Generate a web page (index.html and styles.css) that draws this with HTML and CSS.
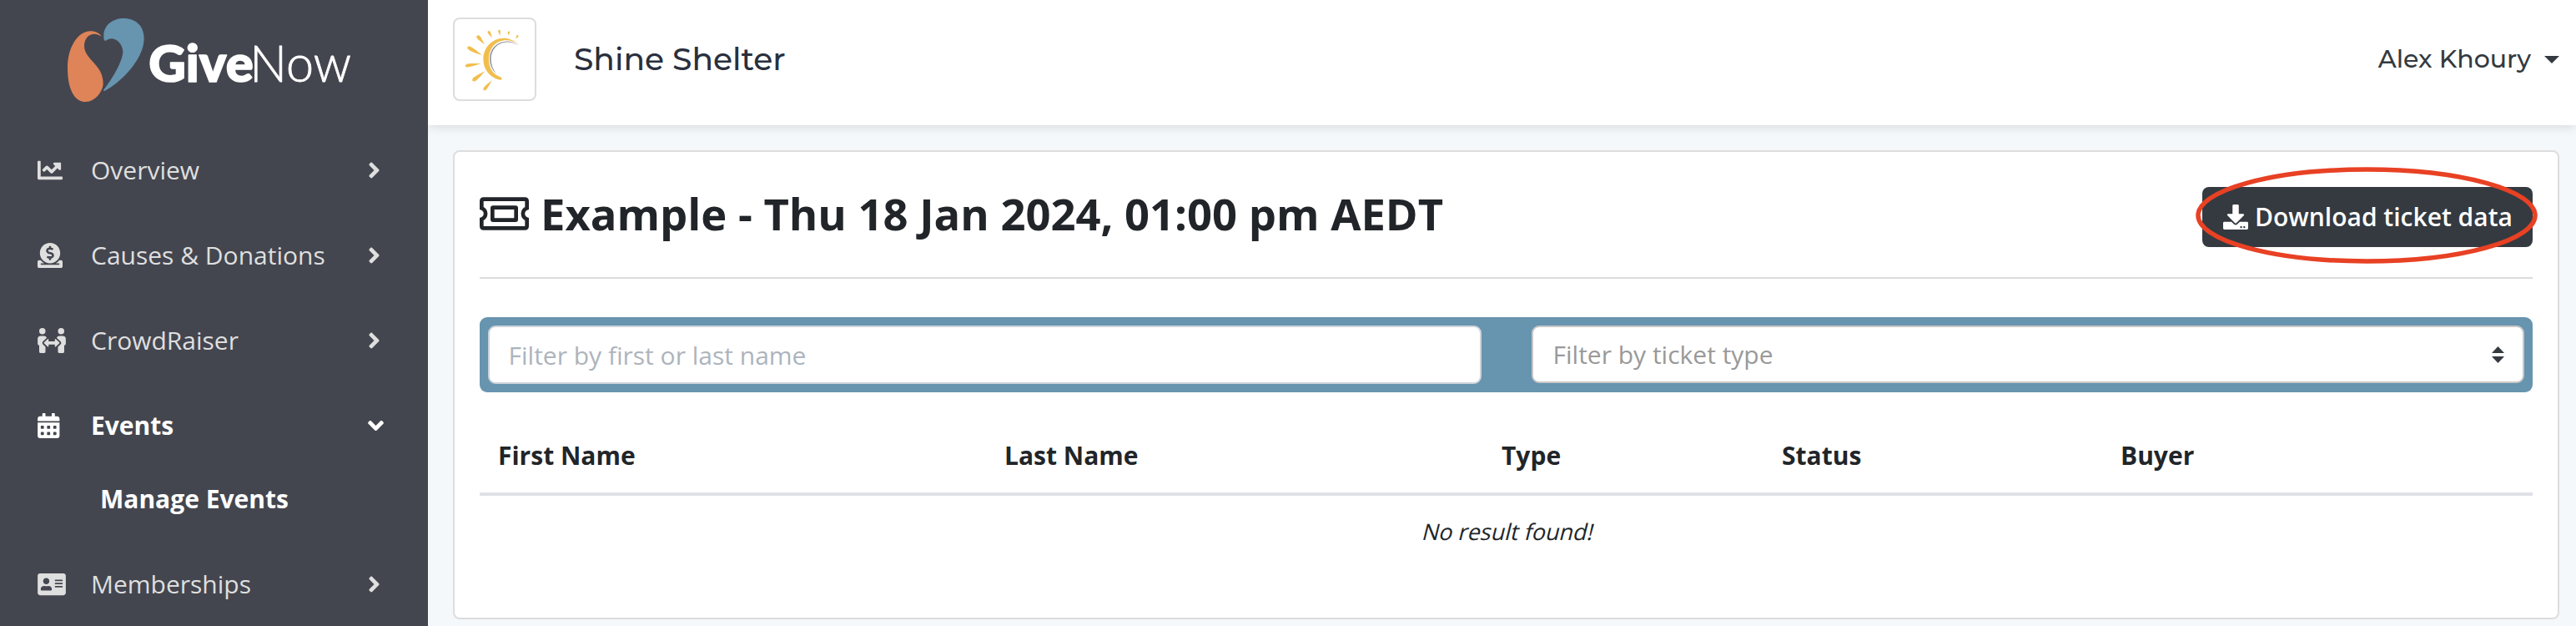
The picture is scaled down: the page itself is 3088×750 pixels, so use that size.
FILE: index.html
```
<!DOCTYPE html>
<html lang="en">
<head>
<meta charset="utf-8">
<title>GiveNow - Manage Events</title>
<link rel="stylesheet" href="styles.css">
</head>
<body>
<svg class="defs" aria-hidden="true">
  <defs>
    <symbol id="angle-right" viewBox="0 0 256 512"><path d="M224.300 273l-136 136c-9.400 9.400-24.600 9.400-33.900 0l-22.600-22.600c-9.400-9.400-9.400-24.600 0-33.900l96.400-96.400-96.400-96.400c-9.400-9.400-9.400-24.600 0-33.900L54.300 103c9.400-9.400 24.600-9.400 33.900 0l136 136c9.500 9.400 9.500 24.600.1 34z"/></symbol>
    <path id="ray" d="M0 0C.3 -.25 .6 -.5 .8 -.5C1.050 -.5 1.050 .5 .8 .5C.6 .5 .3 .25 0 0Z"/>
  </defs>
</svg>
<div class="app">
  <aside class="sidebar">
    <div class="brand">
      <svg class="brand-logo" viewBox="240 60 1025 310">
        <path fill="#de8458" d="M366 132C354 116 340 112 325 112C280 112 243 170 243 245C243 320 268 366 307 366C345 366 371 325 371 300C371 230 303 215 303 165C303 135 325 119 345 123C355 125 360 128 366 132Z"/>
        <path fill="#6794af" d="M380 147C372 145 373 135 373 125C375 90 405 66 445 66C490 66 518 95 518 138C518 215 430 300 376 327C372 328 371 325 374 321C410 275 442 215 442 185C440 150 405 125 380 147Z"/>
        <text class="brand-give" x="535" y="293" textLength="376" lengthAdjust="spacingAndGlyphs">Give</text>
        <text class="brand-now" x="898" y="293" textLength="365" lengthAdjust="spacingAndGlyphs">Now</text>
      </svg>
    </div>
    <nav class="menu">
      <a class="menu-item">
        <span class="menu-icon"><svg viewBox="0 0 512 512" width="30" height="30"><path d="M496 384H64V80c0-8.840-7.160-16-16-16H16C7.160 64 0 71.160 0 80v336c0 17.670 14.330 32 32 32h464c8.840 0 16-7.160 16-16v-32c0-8.840-7.160-16-16-16zM464 96H345.940c-21.380 0-32.090 25.850-16.970 40.970l32.400 32.400L288 242.750l-73.370-73.370c-12.500-12.500-32.760-12.500-45.250 0l-68.690 68.690c-6.250 6.250-6.250 16.380 0 22.630l22.620 22.620c6.250 6.250 16.380 6.250 22.630 0L192 237.250l73.370 73.370c12.500 12.500 32.760 12.500 45.250 0l96-96 32.400 32.400c15.120 15.120 40.970 4.410 40.970-16.970V112c.01-8.840-7.150-16-15.990-16z"/></svg></span>
        <span class="menu-label">Overview</span>
        <svg class="menu-arrow" width="15" height="30"><use href="#angle-right"/></svg>
      </a>
      <a class="menu-item">
        <span class="menu-icon"><svg viewBox="0 0 512 512" width="30" height="30"><path d="M256 416c114.900 0 208-93.100 208-208S370.900 0 256 0 48 93.100 48 208s93.100 208 208 208zM233.800 97.400V80.600c0-9.200 7.400-16.600 16.600-16.600h11.100c9.200 0 16.600 7.400 16.600 16.600v17c15.500.8 30.500 6.100 43 15.400 5.600 4.100 6.200 12.300 1.200 17.100L306 145.600c-3.800 3.700-9.500 3.800-14 1-5.400-3.400-11.400-5.100-17.800-5.100h-38.900c-9 0-16.300 8.200-16.300 18.300 0 8.200 5 15.500 12.100 17.600l62.300 18.700c25.700 7.700 43.700 32.400 43.700 60.100 0 34-26.400 61.500-59.100 62.400v16.800c0 9.200-7.400 16.600-16.600 16.600h-11.100c-9.200 0-16.600-7.400-16.600-16.600v-17c-15.500-.8-30.500-6.100-43-15.400-5.600-4.100-6.200-12.300-1.200-17.100l16.300-15.500c3.800-3.700 9.500-3.800 14-1 5.400 3.400 11.400 5.100 17.800 5.100h38.900c9 0 16.300-8.200 16.300-18.300 0-8.200-5-15.500-12.100-17.600l-62.300-18.700c-25.700-7.700-43.700-32.400-43.700-60.100.1-34 26.400-61.500 59.100-62.400zM480 352h-32.500c-19.600 26-44.600 47.700-73 64h63.800c5.300 0 9.600 3.600 9.600 8v16c0 4.400-4.300 8-9.600 8H73.600c-5.300 0-9.600-3.600-9.600-8v-16c0-4.400 4.300-8 9.600-8h63.800c-28.400-16.300-53.300-38-73-64H32c-17.700 0-32 14.300-32 32v96c0 17.700 14.300 32 32 32h448c17.700 0 32-14.300 32-32v-96c0-17.700-14.300-32-32-32z"/></svg></span>
        <span class="menu-label">Causes &amp; Donations</span>
        <svg class="menu-arrow" width="15" height="30"><use href="#angle-right"/></svg>
      </a>
      <a class="menu-item">
        <span class="menu-icon"><svg viewBox="0 0 576 512" width="34" height="30"><path d="M96,128A64,64,0,1,0,32,64,64,64,0,0,0,96,128Zm0,176.080a44.110,44.110,0,0,1,13.640-32L181.770,204c1.650-1.550,3.770-2.310,5.610-3.570A63.910,63.910,0,0,0,128,160H64A64,64,0,0,0,0,224v96a32,32,0,0,0,32,32V480a32,32,0,0,0,32,32h64a32,32,0,0,0,32-32V383.610l-50.360-47.530A44.080,44.080,0,0,1,96,304.080ZM480,128a64,64,0,1,0-64-64A64,64,0,0,0,480,128Zm32,32H448a63.910,63.910,0,0,0-59.380,40.420c1.840,1.270,4,2,5.620,3.590l72.120,68.060a44.370,44.370,0,0,1,0,64L416,383.620V480a32,32,0,0,0,32,32h64a32,32,0,0,0,32-32V352a32,32,0,0,0,32-32V224A64,64,0,0,0,512,160ZM444.400,295.340l-72.120-68.060A12,12,0,0,0,352,236v36H224V236a12,12,0,0,0-20.280-8.730L131.600,295.340a12.400,12.400,0,0,0,0,17.470l72.120,68.070A12,12,0,0,0,224,372.140V336H352v36.140a12,12,0,0,0,20.280,8.740l72.120-68.070A12.400,12.400,0,0,0,444.400,295.340Z"/></svg></span>
        <span class="menu-label">CrowdRaiser</span>
        <svg class="menu-arrow" width="15" height="30"><use href="#angle-right"/></svg>
      </a>
      <a class="menu-item active">
        <span class="menu-icon"><svg viewBox="0 0 448 512" width="26.500" height="30"><path fill-rule="evenodd" d="M0 464c0 26.500 21.500 48 48 48h352c26.500 0 48-21.500 48-48V192H0zM76 256h40q12 0 12 12v40q0 12-12 12H76q-12 0-12-12v-40q0-12 12-12zm128 0h40q12 0 12 12v40q0 12-12 12h-40q-12 0-12-12v-40q0-12 12-12zm128 0h40q12 0 12 12v40q0 12-12 12h-40q-12 0-12-12v-40q0-12 12-12zM76 384h40q12 0 12 12v40q0 12-12 12H76q-12 0-12-12v-40q0-12 12-12zm128 0h40q12 0 12 12v40q0 12-12 12h-40q-12 0-12-12v-40q0-12 12-12zm128 0h40q12 0 12 12v40q0 12-12 12h-40q-12 0-12-12v-40q0-12 12-12zM400 64h-48V16c0-8.800-7.200-16-16-16h-32c-8.800 0-16 7.200-16 16v48H160V16c0-8.800-7.200-16-16-16h-32c-8.800 0-16 7.200-16 16v48H48C21.500 64 0 85.500 0 112v48h448v-48c0-26.500-21.500-48-48-48z"/></svg></span>
        <span class="menu-label">Events</span>
        <svg class="menu-arrow down" viewBox="0 0 320 512" width="19" height="30"><path d="M143 352.300L7 216.300c-9.400-9.400-9.400-24.600 0-33.900l22.600-22.600c9.400-9.400 24.600-9.400 33.900 0l96.400 96.400 96.400-96.400c9.400-9.400 24.600-9.400 33.900 0l22.600 22.600c9.400 9.400 9.400 24.600 0 33.900l-136 136c-9.200 9.400-24.400 9.400-33.800 0z"/></svg>
      </a>
      <a class="submenu-item">Manage Events</a>
      <a class="menu-item">
        <span class="menu-icon"><svg viewBox="0 0 576 512" width="34" height="30"><path d="M528 32H48C21.500 32 0 53.500 0 80v352c0 26.500 21.500 48 48 48h480c26.500 0 48-21.500 48-48V80c0-26.500-21.500-48-48-48zm-352 96c35.300 0 64 28.700 64 64s-28.700 64-64 64-64-28.700-64-64 28.700-64 64-64zm112 236.800c0 10.600-10 19.200-22.400 19.200H86.400C74 384 64 375.400 64 364.800v-19.200c0-31.800 30.100-57.600 67.200-57.600h5c12.300 5.100 25.700 8 39.800 8s27.600-2.900 39.800-8h5c37.100 0 67.200 25.800 67.200 57.600v19.200zM512 312c0 4.400-3.600 8-8 8H360c-4.400 0-8-3.600-8-8v-16c0-4.400 3.600-8 8-8h144c4.400 0 8 3.600 8 8v16zm0-64c0 4.400-3.600 8-8 8H360c-4.400 0-8-3.600-8-8v-16c0-4.400 3.600-8 8-8h144c4.400 0 8 3.600 8 8v16zm0-64c0 4.400-3.600 8-8 8H360c-4.400 0-8-3.600-8-8v-16c0-4.400 3.600-8 8-8h144c4.400 0 8 3.600 8 8v16z"/></svg></span>
        <span class="menu-label">Memberships</span>
        <svg class="menu-arrow" width="15" height="30"><use href="#angle-right"/></svg>
      </a>
    </nav>
  </aside>
  <div class="main">
    <header class="topbar">
      <div class="org-logo">
        <svg viewBox="15 24 288 288" width="96" height="96">
          <g fill="#f1be4e">
            <path d="M247 116C228 98 205 91 190 92C150 93 118 125 118 168C118 205 142 235 178 242C184 243 187 236 182 233C152 222 138 200 138 168C138 130 160 103 195 100C215 99 232 105 247 116Z"/>
            <use href="#ray" transform="translate(178 83) rotate(-99) scale(21 8)"/>
            <use href="#ray" transform="translate(208 82) rotate(-80) scale(15 7)"/>
            <use href="#ray" transform="translate(235 94) rotate(-56) scale(15 7)"/>
            <use href="#ray" transform="translate(149 90) rotate(-119) scale(27 10)"/>
            <use href="#ray" transform="translate(122 114) rotate(-130) scale(41 13)"/>
            <use href="#ray" transform="translate(113 153) rotate(-151) scale(60 13)"/>
            <use href="#ray" transform="translate(109 183) rotate(171) scale(57 12)"/>
            <use href="#ray" transform="translate(124 211) rotate(142) scale(57 14)"/>
            <use href="#ray" transform="translate(149 244) rotate(130) scale(46 12)"/>
          </g>
          <path fill="#94979d" d="M245 118C228 106 210 102 197 104C164 107 141 132 141 165C141 187 149 206 164 219C152 204 146 187 146 166C146 134 168 110 197 107C212 105 228 109 245 118Z"/>
        </svg>
      </div>
      <div class="org-name">Shine Shelter</div>
      <div class="user">Alex Khoury<span class="caret"></span></div>
    </header>
    <section class="card">
      <div class="card-head">
        <h2 class="title">
          <svg class="title-icon" viewBox="45 49 177 118" width="59" height="40"><g fill="none" stroke="#212529" stroke-width="14"><path d="M60 56H207Q215 56 215 64V88C196 96 196 120 215 128V152Q215 160 207 160H60Q52 160 52 152V128C71 120 71 96 52 88V64Q52 56 60 56Z"/><rect x="91" y="86" width="85" height="45" rx="2"/></g></svg>
          <span>Example - Thu 18 Jan 2024, 01:00 pm AEDT</span>
        </h2>
        <button class="download">
          <svg viewBox="0 0 512 512" width="30" height="30"><path d="M216 0h80c13.300 0 24 10.700 24 24v168h87.700c17.800 0 26.700 21.500 14.100 34.100L269.700 378.300c-7.500 7.500-19.800 7.500-27.300 0L90.100 226.100c-12.600-12.600-3.700-34.100 14.100-34.100H192V24c0-13.300 10.700-24 24-24zm296 376v112c0 13.300-10.700 24-24 24H24c-13.300 0-24-10.700-24-24V376c0-13.300 10.700-24 24-24h146.700l49 49c20.100 20.100 52.500 20.100 72.600 0l49-49H488c13.300 0 24 10.700 24 24zm-124 88c0-11-9-20-20-20s-20 9-20 20 9 20 20 20 20-9 20-20zm64 0c0-11-9-20-20-20s-20 9-20 20 9 20 20 20 20-9 20-20z"/></svg>
          <span>Download ticket data</span>
          <svg class="highlight" viewBox="0 0 410 116"><ellipse cx="205" cy="58" rx="202" ry="55" fill="none" stroke="#e84124" stroke-width="5.500"/></svg>
        </button>
      </div>
      <div class="filters">
        <input class="filter-name" type="text" placeholder="Filter by first or last name">
        <div class="filter-type">
          <span>Filter by ticket type</span>
          <svg viewBox="0 0 15 20" width="15" height="20"><path fill="#343a40" d="M7.500 0L15 8H0ZM7.500 20L15 12H0Z"/></svg>
        </div>
      </div>
      <div class="table">
        <div class="table-head">
          <span>First Name</span><span>Last Name</span><span>Type</span><span>Status</span><span>Buyer</span>
        </div>
        <div class="table-empty"><span class="slanted">No result found!</span></div>
      </div>
    </section>
  </div>
</div>
</body>
</html>
```
FILE: styles.css
```
* { box-sizing: border-box; }
body {
  margin: 0;
  font-family: "Open Sans", "Noto Sans", sans-serif;
  font-size: 30px;
  color: #212529;
  background: #f4f8fb;
}
svg { display: block; flex: none; }
.defs { display: none; }
.app { display: flex; height: 750px; overflow: hidden; }

/* Sidebar */
.sidebar { flex: none; width: 513px; background: #44464f; color: #dfdfdf; }
.brand { height: 153px; padding: 20px 0 0 80px; }
.brand-logo { width: 341.670px; height: 103.330px; overflow: visible; }
.brand-give, .brand-now { font-family: Lato, sans-serif; font-size: 181px; fill: #fff; stroke: #fff; stroke-linejoin: round; }
.brand-give { font-weight: 900; stroke-width: 5; }
.brand-now { font-weight: 300; stroke-width: 2.500; }
.menu-item { display: flex; align-items: center; height: 102px; padding: 0 57px 0 45px; }
.menu-item svg { fill: currentColor; }
.menu-icon { width: 64px; flex: none; }
.menu-label { flex: 1; line-height: 40px; white-space: nowrap; }
.menu-arrow.down { margin-right: -4px; }
.active { color: #fff; font-weight: 700; }
.submenu-item {
  display: flex;
  align-items: center;
  height: 88px;
  padding: 0 0 16px 120px;
  color: #fff;
  font-weight: 700;
}

/* Top bar */
.main { flex: 1; min-width: 0; }
.topbar {
  display: flex;
  align-items: center;
  height: 150px;
  padding: 0 20px 8px 30px;
  background: #fff;
  box-shadow: 0 2px 12px rgba(0, 0, 0, .12);
  clip-path: inset(0 0 -30px 0);
}
.org-logo { width: 100px; height: 100px; border: 2px solid #ddd; border-radius: 8px; }
.org-name {
  margin-left: 45px;
  font: 500 37.600px/46px Montserrat, Inter, sans-serif;
  color: #292f3d;
}
.user {
  display: flex;
  align-items: center;
  gap: 16px;
  margin-left: auto;
  font: 500 30px/40px Montserrat, Inter, sans-serif;
  color: #343a40;
}
.caret { border: 9px solid transparent; border-top-color: currentColor; border-bottom: 0; }

/* Card */
.card {
  height: 562px;
  margin: 30px 20px 0 30px;
  padding: 42px 30px 0;
  background: #fff;
  border: 2px solid #ddd;
  border-radius: 8px;
}
.card-head {
  display: flex;
  align-items: flex-start;
  justify-content: space-between;
  height: 110px;
  border-bottom: 2px solid #ddd;
}
.title {
  display: flex;
  align-items: center;
  gap: 14px;
  margin: 0;
  font-size: 52.500px;
  font-weight: 700;
  line-height: 63px;
  white-space: nowrap;
}
.download {
  position: relative;
  display: flex;
  align-items: center;
  gap: 8px;
  width: 396px;
  height: 72px;
  padding: 0 0 0 25px;
  border: 0;
  border-radius: 8px;
  background: #343a40;
  color: #fff;
  font: 600 30px/40px "Open Sans", "Noto Sans", sans-serif;
  white-space: nowrap;
}
.download svg { fill: #fff; }
.download .highlight { position: absolute; left: -8px; top: -24px; width: 410px; height: 116px; }

.filters {
  display: grid;
  grid-template-columns: 1191px 1190px;
  column-gap: 60px;
  align-items: start;
  height: 90px;
  margin-top: 46px;
  padding: 10px;
  border-radius: 9px;
  background: #6794af;
}
.filter-name, .filter-type {
  width: 100%;
  border-radius: 9px;
  background: #fff;
  font: 400 30px/40px "Open Sans", "Noto Sans", sans-serif;
}
.filter-name { height: 70px; padding: 0 22.500px; border: 2px solid #ced4da; }
.filter-name::placeholder { color: #adb4bd; opacity: 1; }
.filter-type {
  display: flex;
  align-items: center;
  justify-content: space-between;
  height: 69px;
  padding: 0 22px 0 23.500px;
  border: 2px solid #c8c8c8;
  color: #999;
}

.table { margin-top: 30px; }
.table-head {
  display: grid;
  grid-template-columns: 607px 596px 336px 406px 1fr;
  align-items: center;
  height: 94px;
  padding-top: 2px;
  border-bottom: 4px solid #dee2e6;
  font-weight: 700;
  line-height: 40px;
}
.table-head span { padding-left: 22px; }
.table-empty { padding: 23px 0 0 5px; font-size: 27px; line-height: 40px; text-align: center; }
.slanted { display: inline-block; transform: skewX(-14deg); }
```
